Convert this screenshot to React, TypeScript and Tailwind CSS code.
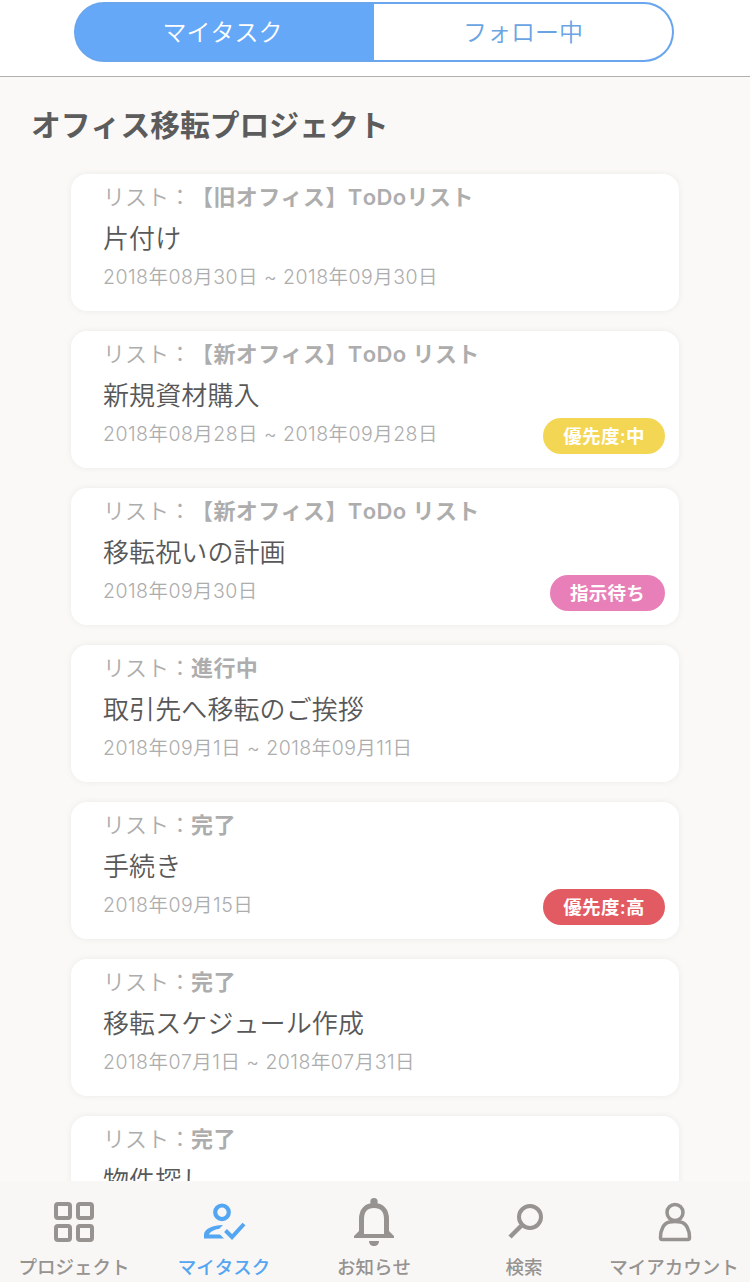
import type { ReactNode } from "react";
import clsx from "clsx";

interface Task {
  list: string;
  title: string;
  date: string;
  badge?: { label: string; className: string };
}

const tasks: Task[] = [
  { list: "【旧オフィス】ToDoリスト", title: "片付け", date: "2018年08月30日 ~ 2018年09月30日" },
  {
    list: "【新オフィス】ToDo リスト",
    title: "新規資材購入",
    date: "2018年08月28日 ~ 2018年09月28日",
    badge: { label: "優先度:中", className: "w-[122px] bg-[#f3d653]" },
  },
  {
    list: "【新オフィス】ToDo リスト",
    title: "移転祝いの計画",
    date: "2018年09月30日",
    badge: { label: "指示待ち", className: "w-[115px] bg-[#e97fb8]" },
  },
  { list: "進行中", title: "取引先へ移転のご挨拶", date: "2018年09月1日 ~ 2018年09月11日" },
  {
    list: "完了",
    title: "手続き",
    date: "2018年09月15日",
    badge: { label: "優先度:高", className: "w-[122px] bg-[#e25a62]" },
  },
  { list: "完了", title: "移転スケジュール作成", date: "2018年07月1日 ~ 2018年07月31日" },
  { list: "完了", title: "物件探し", date: "2018年07月1日 ~ 2018年07月31日" },
];

function TaskCard({ task }: { task: Task }) {
  return (
    <li className="relative h-[137px] shrink-0 rounded-[16px] bg-white pl-8 pt-[7px] shadow-[0_0_6px_rgba(120,100,90,0.09)]">
      <p className="h-8 whitespace-nowrap text-[22px] leading-8 text-[#adadad]">
        <span className="font-[350]">リスト：</span>
        <span className="font-semibold tracking-[0.4px]">{task.list}</span>
      </p>
      <h2 className="mt-[6px] h-10 text-[26px] font-[350] leading-10 tracking-[0.1px] text-[#585858]">
        {task.title}
      </h2>
      <p className="mt-[2px] h-8 whitespace-nowrap text-[19.5px] font-[350] leading-8 tracking-[0.46px] text-[#adadad]">
        {task.date}
      </p>
      {task.badge && (
        <span
          className={clsx(
            "absolute bottom-[14px] right-[14px] flex h-9 items-center justify-center rounded-full pt-[2px] text-[18.5px] font-semibold tracking-[0.3px] text-white",
            task.badge.className,
          )}
        >
          {task.badge.label}
        </span>
      )}
    </li>
  );
}

function NavItem({ label, active, children }: { label: string; active?: boolean; children: ReactNode }) {
  return (
    <a
      className={clsx(
        "flex w-[150px] shrink-0 flex-col items-center",
        active ? "text-[#54a5f2]" : "text-[#969391]",
      )}
    >
      <svg viewBox="0 0 60 60" className="mt-[11px] size-[60px]" fill="none" stroke="currentColor">
        {children}
      </svg>
      <span className="mr-[2px] mt-px whitespace-nowrap text-[18.5px] font-medium leading-7">{label}</span>
    </a>
  );
}

export default function App() {
  return (
    <div className="flex h-[1282px] w-[750px] flex-col overflow-hidden bg-[#faf9f7] font-['Inter','Noto_Sans_CJK_JP',sans-serif] [font-kerning:none] [text-spacing-trim:space-all]">
      {/* Segmented tabs */}
      <header className="flex h-[77px] shrink-0 justify-center border-b border-[#b0b0ae] bg-white pr-[2px] pt-[2px]">
        <div className="flex h-[60px] w-[600px] overflow-hidden rounded-full border-2 border-[#69a6ee] bg-[#65a8f8] text-[24px] font-[350]">
          <button className="w-[298px] pr-[5px] pt-px text-white">マイタスク</button>
          <button className="flex-1 bg-white pt-px text-[#6aa4e2]">フォロー中</button>
        </div>
      </header>

      <main className="flex min-h-0 flex-1 flex-col overflow-hidden">
        <h1 className="mt-[28px] h-10 shrink-0 pl-[31px] text-[29.8px] font-semibold leading-10 text-[#5c5c5c]">
          オフィス移転プロジェクト
        </h1>
        <ul className="ml-[71px] mt-[29px] flex w-[608px] flex-col gap-5">
          {tasks.map((task) => (
            <TaskCard key={task.title} task={task} />
          ))}
        </ul>
      </main>

      {/* Bottom navigation */}
      <nav className="z-10 flex h-[101px] shrink-0 bg-[#f8f7f6]">
        <NavItem label="プロジェクト">
          <g strokeWidth="4">
            <rect x="11" y="12" width="14" height="14" rx="2" />
            <rect x="33" y="12" width="14" height="14" rx="2" />
            <rect x="11" y="34" width="14" height="14" rx="2" />
            <rect x="33" y="34" width="14" height="14" rx="2" />
          </g>
        </NavItem>
        <NavItem label="マイタスク" active>
          <circle cx="27" cy="20.3" r="6.8" strokeWidth="4.2" />
          <path d="M28 33C18 33 9 37 9 42.500V46.500H29L25 42.500H14C15 39 22 37 24 37Z" fill="currentColor" stroke="none" />
          <path d="M30.500 38.500L37 45L49 32" strokeWidth="4" />
        </NavItem>
        <NavItem label="お知らせ">
          <circle cx="29" cy="9.700" r="3.700" fill="currentColor" stroke="none" />
          <path d="M16.500 43V27C16.500 18 21.500 13.500 29 13.500S41.500 18 41.500 27V43" strokeWidth="5" />
          <path d="M14 39L9 44V46H49V44L44 39V42H14Z" fill="currentColor" stroke="none" />
          <path d="M24 49H34C34 52 32 54 29 54S24 52 24 49Z" fill="currentColor" stroke="none" />
        </NavItem>
        <NavItem label="検索">
          <circle cx="35" cy="25" r="11" strokeWidth="4" />
          <path d="M26 34L15 45" strokeWidth="4.500" />
        </NavItem>
        <NavItem label="マイアカウント">
          <circle cx="30" cy="20.500" r="8" strokeWidth="3.500" />
          <path
            d="M24.500 30C18.500 31 15.500 38 15.500 45.500Q15.500 47.500 17 47.500H43Q44.500 47.500 44.500 45.500C44.500 38 41.500 31 35.500 30Q30 29 24.500 30Z"
            strokeWidth="3.500"
          />
        </NavItem>
      </nav>
    </div>
  );
}
